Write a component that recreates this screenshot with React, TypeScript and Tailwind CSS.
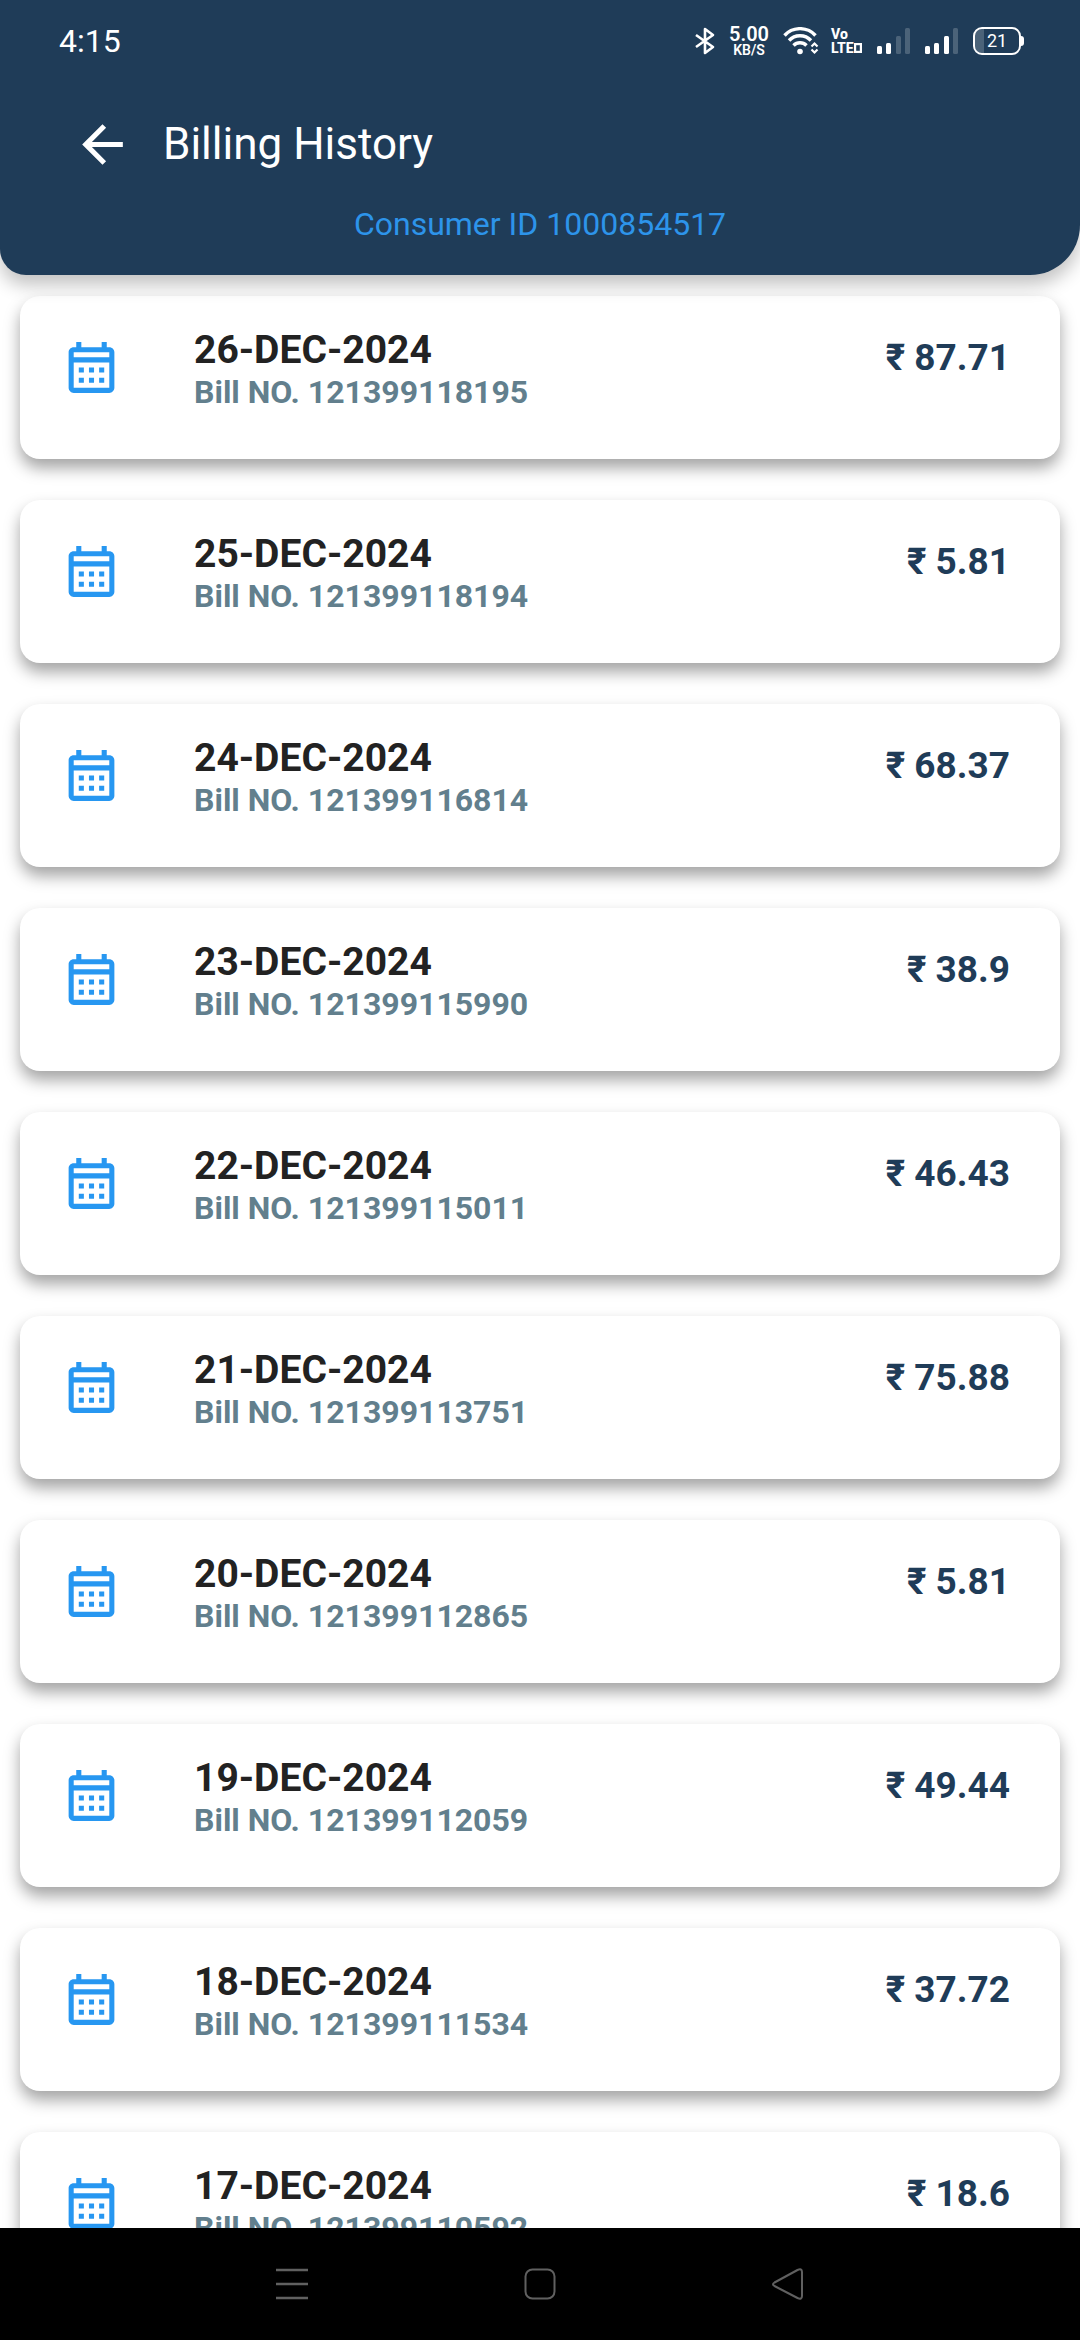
import React from 'react';

interface Bill {
  date: string;
  billNo: string;
  amount: string;
}

const bills: Bill[] = [
  { date: '26-DEC-2024', billNo: '121399118195', amount: '87.71' },
  { date: '25-DEC-2024', billNo: '121399118194', amount: '5.81' },
  { date: '24-DEC-2024', billNo: '121399116814', amount: '68.37' },
  { date: '23-DEC-2024', billNo: '121399115990', amount: '38.9' },
  { date: '22-DEC-2024', billNo: '121399115011', amount: '46.43' },
  { date: '21-DEC-2024', billNo: '121399113751', amount: '75.88' },
  { date: '20-DEC-2024', billNo: '121399112865', amount: '5.81' },
  { date: '19-DEC-2024', billNo: '121399112059', amount: '49.44' },
  { date: '18-DEC-2024', billNo: '121399111534', amount: '37.72' },
  { date: '17-DEC-2024', billNo: '121399110592', amount: '18.6' },
];

const BluetoothIcon = () => (
  <svg className="w-5 h-7" viewBox="0 0 20 28" fill="none" stroke="currentColor" strokeWidth="2.6" strokeLinejoin="round" aria-hidden="true">
    <path d="M1 8l17 12-8 6V2l8 6L1 20" />
  </svg>
);

const WifiIcon = () => (
  <svg className="w-9 h-7" viewBox="0 0 36 28" fill="none" stroke="currentColor" strokeWidth="3.4" aria-hidden="true">
    <path d="M1.5 8.5a21 21 0 0 1 31 0" />
    <path d="M6 13.5a15 15 0 0 1 22 0" />
    <path d="M10.5 18.5a9 9 0 0 1 13 0" />
    <circle cx="17" cy="24.5" r="2.8" fill="currentColor" stroke="none" />
    <path d="M28.5 19.5l3-3 3 3M28.5 22.5l3 3 3-3" strokeWidth="2.2" />
  </svg>
);

const SignalIcon = ({ level }: { level: number }) => (
  <svg className="w-[34px] h-7" viewBox="0 0 34 28" fill="currentColor" aria-hidden="true">
    <rect x="0" y="19" width="5" height="8" rx="1.5" opacity={level >= 1 ? 1 : 0.2} />
    <rect x="9" y="16" width="5" height="11" rx="1.5" opacity={level >= 2 ? 1 : 0.2} />
    <rect x="19" y="9" width="5" height="18" rx="1.5" opacity={level >= 3 ? 1 : 0.2} />
    <rect x="28" y="1" width="5" height="26" rx="1.5" opacity={level >= 4 ? 1 : 0.2} />
  </svg>
);

const BatteryIndicator = ({ percent }: { percent: number }) => (
  <div className="flex items-center">
    <div className="relative flex h-7 w-12 items-center justify-center overflow-hidden rounded-[9px] border-2 border-white">
      <div className="absolute inset-y-0 left-0 bg-white/20" style={{ width: `${percent}%` }} />
      <span className="text-lg leading-none">{percent}</span>
    </div>
    <div className="h-2.5 w-[3px] rounded-r-sm bg-white" />
  </div>
);

const StatusBar = () => (
  <div className="flex h-[82px] items-center justify-between pl-[59px] pr-14">
    <span className="text-[32px] leading-none">4:15</span>
    <div className="flex items-center">
      <BluetoothIcon />
      <div className="ml-3 flex w-11 flex-col items-center font-semibold">
        <span className="text-[20px] leading-[18px]">5.00</span>
        <span className="text-[14px] leading-[14px]">KB/S</span>
      </div>
      <div className="ml-3">
        <WifiIcon />
      </div>
      <div className="ml-3 flex w-8 flex-col text-[14px] font-extrabold leading-[14px]">
        <span>Vo</span>
        <span className="flex items-center">
          LTE
          <svg className="h-[10px] w-2" viewBox="0 0 8 10" fill="none" stroke="currentColor" strokeWidth="2.4" aria-hidden="true">
            <rect x="1" y="1" width="6" height="8" />
          </svg>
        </span>
      </div>
      <div className="ml-[14px] flex gap-[14px]">
        <SignalIcon level={2} />
        <SignalIcon level={3} />
      </div>
      <div className="ml-[14px]">
        <BatteryIndicator percent={21} />
      </div>
    </div>
  </div>
);

const Header = () => (
  <header className="relative z-10 shrink-0 rounded-bl-[26px] rounded-br-[50px] bg-[#1f3c58] pb-8 text-white shadow-[0_10px_18px_rgba(0,0,0,0.24)]">
    <StatusBar />
    <div className="flex h-[124px] items-center gap-[30px] pl-[72px]">
      <button type="button" aria-label="Back">
        <svg className="size-[61px]" viewBox="0 0 24 24" fill="currentColor" aria-hidden="true">
          <path d="M20 11H7.83l5.59-5.59L12 4l-8 8 8 8 1.41-1.41L7.83 13H20v-2z" />
        </svg>
      </button>
      <h1 className="text-[44px] leading-none">Billing History</h1>
    </div>
    <p className="text-center text-[32px] leading-[37px] text-[#2d94ea]">Consumer ID 1000854517</p>
  </header>
);

const CalendarIcon = () => (
  <svg className="size-[61px] shrink-0 text-[#2797f1]" viewBox="0 0 24 24" fill="currentColor" aria-hidden="true">
    <path d="M19 4h-1V2h-2v2H8V2H6v2H5c-1.1 0-2 .9-2 2v14c0 1.1.9 2 2 2h14c1.1 0 2-.9 2-2V6c0-1.1-.9-2-2-2zm0 16H5V10h14v10zm0-12H5V6h14v2zM9 14H7v-2h2v2zm4 0h-2v-2h2v2zm4 0h-2v-2h2v2zm-8 4H7v-2h2v2zm4 0h-2v-2h2v2zm4 0h-2v-2h2v2z" />
  </svg>
);

const BillCard = ({ bill }: { bill: Bill }) => (
  <li className="flex h-[163px] shrink-0 items-start rounded-[20px] bg-white pl-[41px] pr-[50px] pt-8 shadow-[0_9px_16px_rgba(0,0,0,0.36)]">
    <div className="pt-[9px]">
      <CalendarIcon />
    </div>
    <div className="ml-[72px] flex-1">
      <h2 className="text-[39px] font-bold leading-[44px] text-[#222222]">{bill.date}</h2>
      <p className="text-[32px] font-bold leading-[40px] text-[#627f8d]">Bill NO. {bill.billNo}</p>
    </div>
    <p className="pt-2 text-[37px] font-bold leading-[44px] text-[#1f3c58]">₹ {bill.amount}</p>
  </li>
);

const NavigationBar = () => (
  <nav className="relative z-10 flex h-28 shrink-0 items-center justify-center bg-black text-[#606060]">
    <button type="button" aria-label="Recent apps" className="flex w-62 justify-center">
      <svg className="size-8" viewBox="0 0 32 32" fill="none" stroke="currentColor" strokeWidth="2.5" aria-hidden="true">
        <path d="M0 2h32M0 16h32M0 30h32" />
      </svg>
    </button>
    <button type="button" aria-label="Home" className="flex w-62 justify-center">
      <svg className="size-8" viewBox="0 0 32 32" fill="none" stroke="currentColor" strokeWidth="2" aria-hidden="true">
        <rect x="1.5" y="1.5" width="29" height="29" rx="7" />
      </svg>
    </button>
    <button type="button" aria-label="Back" className="flex w-62 justify-center">
      <svg className="size-8" viewBox="0 0 32 32" fill="none" stroke="currentColor" strokeWidth="2" strokeLinejoin="round" aria-hidden="true">
        <path d="M2.5 14.5L25.5 2q4.5-2 4.5 2v24q0 4-4.5 2L2.5 18q-3-1.75 0-3.5z" />
      </svg>
    </button>
  </nav>
);

const App: React.FC = () => {
  return (
    <div className="flex h-screen flex-col bg-white font-['Roboto',sans-serif]">
      <Header />
      <main className="min-h-0 flex-1 overflow-hidden">
        <ul className="flex flex-col gap-[41px] px-5 pb-[41px] pt-[21px]">
          {bills.map((bill) => (
            <BillCard key={bill.billNo} bill={bill} />
          ))}
        </ul>
      </main>
      <NavigationBar />
    </div>
  );
};

export default App;
